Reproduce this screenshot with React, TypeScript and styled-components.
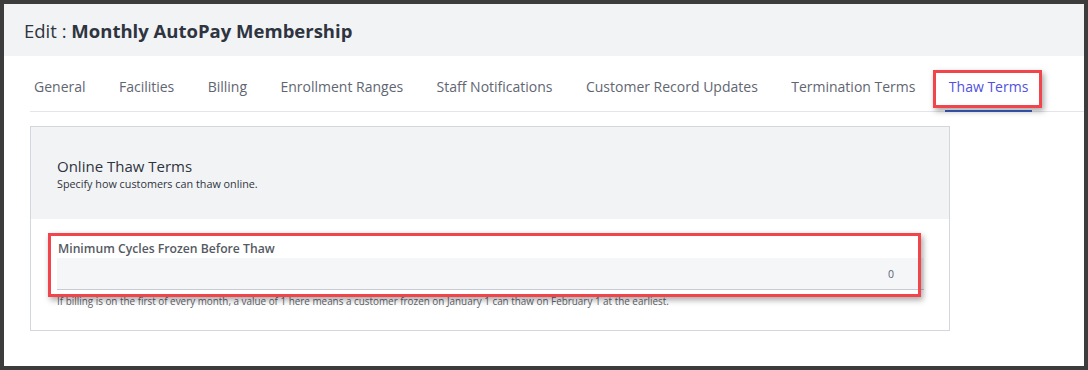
import styled, { createGlobalStyle } from 'styled-components';

const GlobalStyle = createGlobalStyle`
    html, body {
        margin: 0;
        padding: 0;
        background: #3c3c3c;
    }
    body {
        font-family: "Open Sans", "Noto Sans", Arial, sans-serif;
    }
`;

const Frame = styled.div`
    box-sizing: border-box;
    width: 1088px;
    height: 370px;
    border: 4px solid #3c3c3c;
    background: #ffffff;
    overflow: hidden;
`;

const PageHead = styled.div`
    height: 52px;
    background: #f2f3f5;
    display: flex;
    align-items: center;
    padding-left: 20px;
    font-size: 18.5px;
    color: #2e3440;
    b {
        font-weight: 700;
    }
`;

const TabList = styled.div`
    display: flex;
    gap: 25.4px;
    margin-left: 26px;
    border-bottom: 1px solid #e3e5ea;
`;

const Tab = styled.div<{ active?: boolean }>`
    position: relative;
    padding: 21px 4px 13px;
    line-height: 20px;
    font-size: 14px;
    color: ${props => (props.active ? '#4f52e0' : '#5f6672')};
    border-bottom: 2px solid ${props => (props.active ? '#3d5fc4' : 'transparent')};
    margin-bottom: -1px;
    white-space: nowrap;
`;

// red annotation boxes drawn over the screenshot
const TabMark = styled.span`
    position: absolute;
    top: 14px;
    left: -12px;
    right: -10px;
    bottom: 2px;
    border: 3px solid #f1454b;
    box-shadow: 2px 3px 6px rgba(0, 0, 0, 0.35);
    pointer-events: none;
`;

const Panel = styled.div`
    margin: 14px 0 0 26px;
    width: 920px;
    box-sizing: border-box;
    border: 1px solid #d4d6de;
`;

const PanelHead = styled.div`
    background: #f2f3f5;
    padding: 28px 26px 28px;
`;

const PanelTitle = styled.div`
    font-size: 15px;
    line-height: 22px;
    color: #2e3440;
`;

const PanelSub = styled.div`
    font-size: 10.8px;
    line-height: 14px;
    color: #2e3440;
`;

const PanelBody = styled.div`
    padding: 22px 25px 23px 26px;
`;

const Field = styled.div`
    position: relative;
`;

const FieldMark = styled.span`
    position: absolute;
    top: -8px;
    left: -9px;
    right: 3px;
    bottom: -7px;
    border: 3px solid #f1454b;
    box-shadow: 2px 3px 6px rgba(0, 0, 0, 0.35);
    pointer-events: none;
`;

const Label = styled.div`
    font-size: 12.2px;
    font-weight: 600;
    line-height: 16px;
    color: #555a63;
    padding-left: 1px;
    margin-bottom: 1px;
`;

const Input = styled.div`
    height: 31px;
    background: #f5f6f8;
    border-bottom: 1px solid #c9cbd4;
    display: flex;
    align-items: center;
    justify-content: flex-end;
    padding-right: 30px;
    font-size: 10.5px;
    color: #5a5f7a;
`;

const Help = styled.div`
    margin-top: 5px;
    font-size: 9.9px;
    line-height: 12px;
    color: #5f646c;
`;

const tabs = [
    'General',
    'Facilities',
    'Billing',
    'Enrollment Ranges',
    'Staff Notifications',
    'Customer Record Updates',
    'Termination Terms',
    'Thaw Terms',
];

const App = () => {
    return (
        <Frame>
            <GlobalStyle />
            <PageHead>
                Edit :&nbsp;<b>Monthly AutoPay Membership</b>
            </PageHead>

            <TabList>
                {tabs.map(t => {
                    const active = t === 'Thaw Terms';
                    return (
                        <Tab key={t} active={active}>
                            {t}
                            {active && <TabMark />}
                        </Tab>
                    );
                })}
            </TabList>

            <Panel>
                <PanelHead>
                    <PanelTitle>Online Thaw Terms</PanelTitle>
                    <PanelSub>Specify how customers can thaw online.</PanelSub>
                </PanelHead>
                <PanelBody>
                    <Field>
                        <Label>Minimum Cycles Frozen Before Thaw</Label>
                        <Input>0</Input>
                        <FieldMark />
                    </Field>
                    <Help>
                        If billing is on the first of every month, a value of 1 here means a customer frozen on January 1 can thaw on February 1 at the earliest.
                    </Help>
                </PanelBody>
            </Panel>
        </Frame>
    );
};

export default App;
